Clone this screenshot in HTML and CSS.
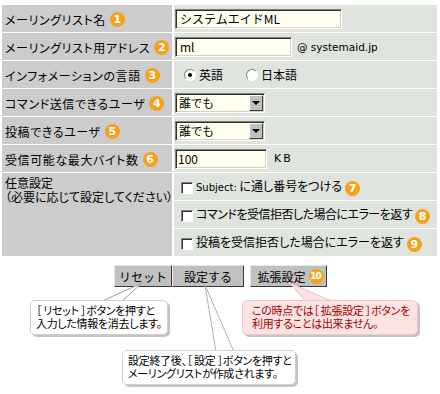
FILE: index.html
```html
<!DOCTYPE html>
<html>

<head>
    <title>メーリングリスト作成</title>
    <link rel="stylesheet" href="styles.css">
</head>

<body>
    <div class="page">
        <table class="form">
            <colgroup>
                <col class="col-label">
                <col class="col-field">
            </colgroup>
            <tr>
                <th><span class="label">メーリングリスト名</span><span class="badge">1</span></th>
                <td><input class="text name" type="text" value="システムエイドML"></td>
            </tr>
            <tr>
                <th><span class="label">メーリングリスト用アドレス</span><span class="badge">2</span></th>
                <td><input class="text addr" type="text" value="ml"><span class="latin domain">@ systemaid.jp</span></td>
            </tr>
            <tr>
                <th><span class="label">インフォメーションの言語</span><span class="badge">3</span></th>
                <td class="radios">
                    <span class="radio on"></span><span class="opt">英語</span>
                    <span class="radio"></span><span class="opt">日本語</span>
                </td>
            </tr>
            <tr>
                <th><span class="label">コマンド送信できるユーザ</span><span class="badge">4</span></th>
                <td>
                    <div class="select"><span class="value">誰でも</span><span class="arrow"></span></div>
                </td>
            </tr>
            <tr>
                <th><span class="label">投稿できるユーザ</span><span class="badge">5</span></th>
                <td>
                    <div class="select"><span class="value">誰でも</span><span class="arrow"></span></div>
                </td>
            </tr>
            <tr>
                <th><span class="label">受信可能な最大バイト数</span><span class="badge">6</span></th>
                <td><input class="text size" type="text" value="100"><span class="latin unit">KB</span></td>
            </tr>
            <tr>
                <th rowspan="3" class="multi">任意設定<br>（必要に応じて設定してください）</th>
                <td class="checks"><span class="check"></span><span class="latin">Subject:</span> に通し番号をつける<span class="badge">7</span></td>
            </tr>
            <tr>
                <td class="checks tight"><span class="check"></span>コマンドを受信拒否した場合にエラーを返す<span class="badge">8</span></td>
            </tr>
            <tr>
                <td class="checks"><span class="check"></span>投稿を受信拒否した場合にエラーを返す<span class="badge">9</span></td>
            </tr>
        </table>

        <div class="buttons">
            <button type="button" class="btn reset">リセット</button>
            <button type="button" class="btn submit">設定する</button>
            <button type="button" class="btn extra">拡張設定<span class="badge small">10</span></button>
        </div>

        <!-- callout tails, drawn over the buttons -->
        <svg class="pointers" width="440" height="394" viewBox="0 0 440 394">
            <polygon points="142,283 100,302 121,302" fill="#fff" stroke="#9a9a9a" stroke-width="1"/>
            <polygon points="205,285 216,352 234,352" fill="#fff" stroke="#b0b0b0" stroke-width="1"/>
            <polygon points="290,283 306,302 334,302" fill="#fbe3e3" stroke="#e6c3c3" stroke-width="1"/>
        </svg>

        <div class="notes">
            <div class="note-row">
                <div class="note reset-note">［ リセット ］ボタンを押すと<br>入力した情報を消去します。</div>
                <div class="note warn">この時点では［ 拡張設定 ］ボタンを<br>利用することは出来ません。</div>
            </div>
            <div class="note submit-note">設定終了後、［ 設定 ］ボタンを押すと<br>メーリングリストが作成されます。</div>
        </div>
    </div>
</body>

</html>
```

FILE: styles.css
```css
* {
    margin: 0;
    padding: 0;
}

body {
    background: #ffffff;
    font-family: "Noto Sans CJK JP", sans-serif;
    font-size: 12px;
    color: #000000;
}

.page {
    position: relative;
    width: 440px;
    height: 394px;
    padding-top: 4px;
    box-sizing: border-box;
}

.form {
    width: 439px;
    table-layout: fixed;
    border-collapse: separate;
    border-spacing: 2px 1px;
}

.col-label {
    width: 170px;
}

.col-field {
    width: 263px;
}

.form th {
    height: 27px;
    padding-left: 3px;
    background: #cccccc;
    text-align: left;
    font-weight: normal;
    white-space: nowrap;
    overflow: hidden;
    font-feature-settings: "palt";
    letter-spacing: 0.6px;
}

.form td {
    height: 27px;
    padding-left: 1px;
    background: #dfe4de;
    white-space: nowrap;
    font-feature-settings: "palt";
}

.form th.multi {
    vertical-align: top;
    padding-top: 3px;
    line-height: 14px;
    letter-spacing: 0;
}

.label {
    vertical-align: middle;
}

.latin {
    font-family: "DejaVu Sans", sans-serif;
    font-size: 10px;
}

/* orange number markers */
.badge {
    display: inline-block;
    width: 15px;
    height: 15px;
    margin-left: 4px;
    border-radius: 50%;
    background: #f5a11c;
    color: #ffffff;
    font-family: "DejaVu Sans", sans-serif;
    font-weight: bold;
    font-size: 11px;
    line-height: 15px;
    letter-spacing: 0;
    text-align: center;
    vertical-align: middle;
}

.badge.small {
    font-size: 9px;
    letter-spacing: -1px;
    text-indent: -1px;
}

/* sunken text fields */
.text {
    height: 20px;
    box-sizing: border-box;
    padding: 0 4px;
    border: 1px solid;
    border-color: #808080 #ffffff #ffffff #808080;
    box-shadow: inset 1px 1px 0 #303030, inset -1px -1px 0 #d4d0c8;
    background: #ffffee;
    font-family: "Noto Sans CJK JP", sans-serif;
    font-size: 12px;
    vertical-align: middle;
    outline: none;
}

.text.name {
    width: 167px;
}

.text.addr {
    width: 117px;
}

.text.size {
    width: 92px;
    padding-left: 2px;
}

.domain {
    margin-left: 5px;
    font-size: 10.5px;
    vertical-align: middle;
}

.unit {
    margin-left: 7px;
    letter-spacing: 2px;
    font-size: 11px;
    vertical-align: middle;
}

/* radios */
.radios {
    font-size: 0;
}

.radio {
    display: inline-block;
    width: 12px;
    height: 12px;
    box-sizing: border-box;
    margin-left: 9px;
    border-radius: 50%;
    border: 1px solid;
    border-color: #808080 #ffffff #ffffff #808080;
    background: #ffffff;
    vertical-align: middle;
    position: relative;
}

.radio + .opt + .radio {
    margin-left: 23px;
}

.radio.on::after {
    content: "";
    position: absolute;
    left: 3px;
    top: 3px;
    width: 4px;
    height: 4px;
    border-radius: 50%;
    background: #000000;
}

.opt {
    margin-left: 3px;
    font-size: 12px;
    vertical-align: middle;
}

/* drop-down look */
.select {
    display: flex;
    align-items: center;
    width: 90px;
    height: 20px;
    box-sizing: border-box;
    border: 1px solid;
    border-color: #808080 #ffffff #ffffff #808080;
    box-shadow: inset 1px 1px 0 #303030, inset -1px -1px 0 #d4d0c8;
    background: #ffffee;
}

.select .value {
    flex: 1;
    padding-left: 3px;
}

.select .arrow {
    position: relative;
    width: 14px;
    height: 16px;
    margin-right: 1px;
    box-sizing: border-box;
    border: 1px solid;
    border-color: #ffffff #404040 #404040 #ffffff;
    background: #c0c0c0;
}

.select .arrow::after {
    content: "";
    position: absolute;
    left: 2px;
    top: 5px;
    border-left: 4px solid transparent;
    border-right: 4px solid transparent;
    border-top: 4px solid #000000;
}

/* check rows */
.form td.checks {
    padding-left: 7px;
}

.form td.tight {
    letter-spacing: -0.5px;
}

.check {
    display: inline-block;
    width: 12px;
    height: 12px;
    box-sizing: border-box;
    margin-right: 3px;
    border: 1px solid;
    border-color: #808080 #ffffff #ffffff #808080;
    box-shadow: inset 1px 1px 0 #303030;
    background: #ffffff;
    vertical-align: middle;
}

.checks .badge {
    margin-left: 3px;
}

/* buttons */
.buttons {
    display: flex;
    justify-content: center;
    margin-top: 8px;
    padding-left: 1px;
}

.btn {
    display: flex;
    align-items: center;
    justify-content: center;
    height: 22px;
    border: 1px solid;
    border-color: #e8e8e8 #383838 #383838 #e8e8e8;
    background: #c0c0c0;
    font-family: "Noto Sans CJK JP", sans-serif;
    font-size: 12px;
    color: #000000;
}

.btn.reset {
    width: 58px;
}

.btn.submit {
    width: 72px;
}

.btn.extra {
    width: 77px;
    margin-left: 6px;
    padding-left: 4px;
}

.btn .badge {
    margin-left: 3px;
}

.pointers {
    position: absolute;
    left: 0;
    top: 0;
    z-index: 1;
}

/* callouts */
.notes {
    position: relative;
    z-index: 2;
    padding-top: 13px;
}

.note-row {
    display: flex;
}

.note {
    height: 35px;
    box-sizing: border-box;
    padding: 3px 0 0 5px;
    border: 1px solid #cfcfcf;
    border-radius: 5px;
    box-shadow: 2px 2px 0 #c4c4c4;
    background: #ffffff;
    font-size: 11px;
    line-height: 13px;
    letter-spacing: -0.3px;
    white-space: nowrap;
    font-feature-settings: "palt";
}

.reset-note {
    width: 138px;
    margin-left: 30px;
}

.warn {
    width: 176px;
    margin-left: 74px;
    padding-left: 9px;
    border-color: #ecc9c9;
    background: #fbe3e3;
    color: #a00000;
}

.submit-note {
    width: 174px;
    margin-top: 15px;
    margin-left: 122px;
    padding-left: 5px;
}
```
